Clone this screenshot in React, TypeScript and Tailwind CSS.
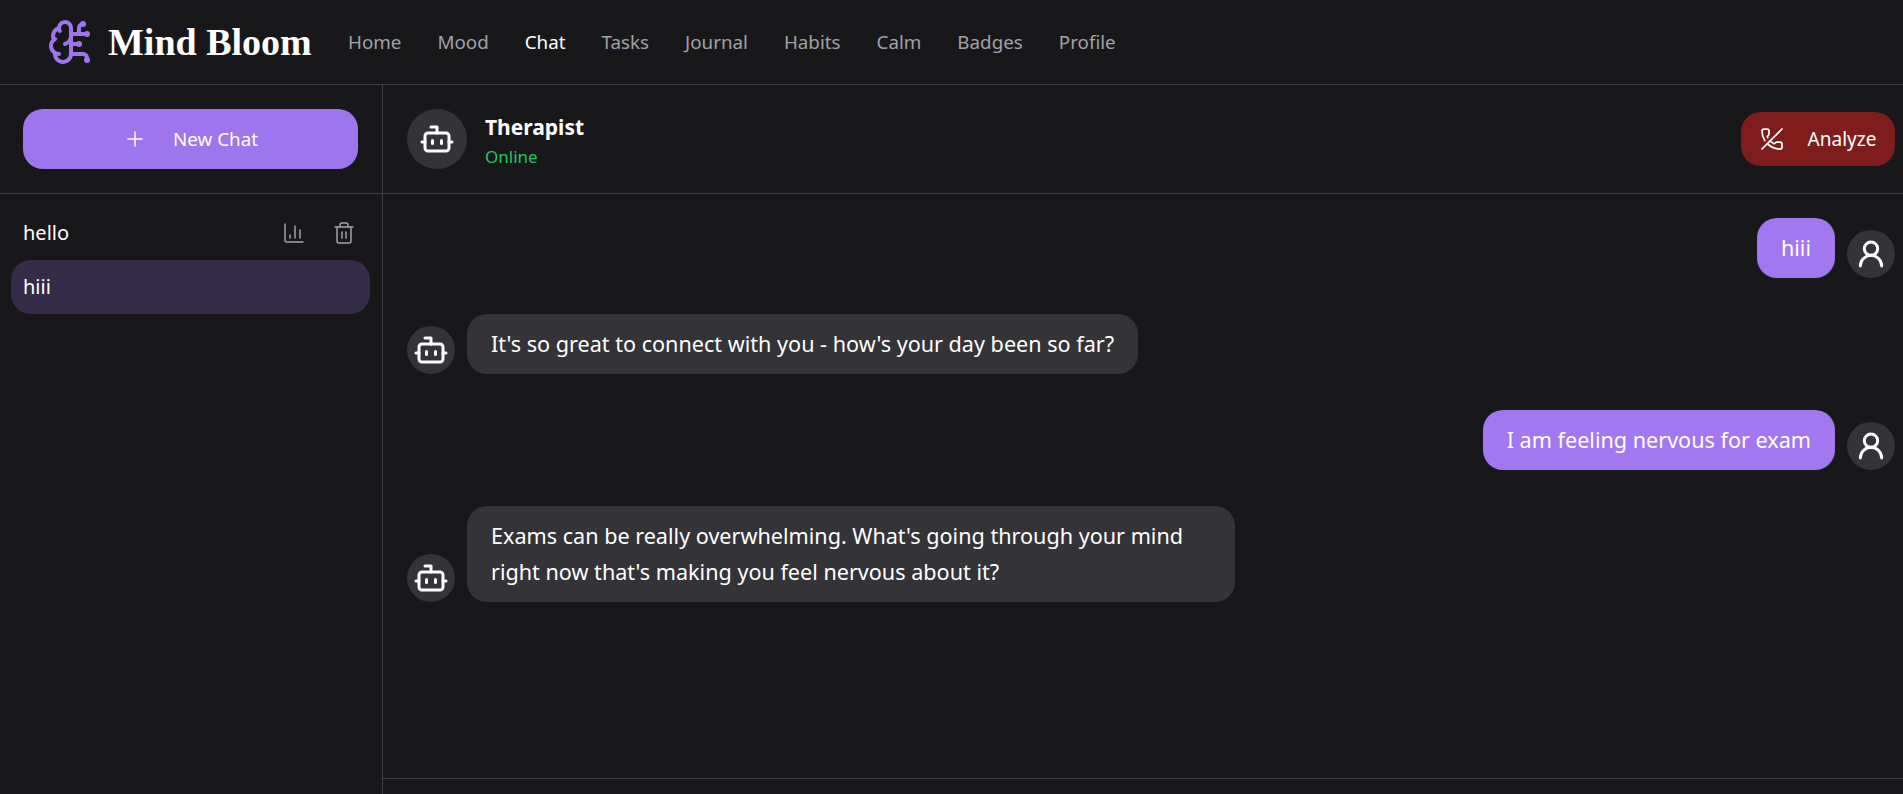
import React from "react";
import { Bot, BrainCircuit, ChartColumn, PhoneOff, Plus, Trash2, UserRound } from "lucide-react";

const navLinks = ["Home", "Mood", "Chat", "Tasks", "Journal", "Habits", "Calm", "Badges", "Profile"];

const Avatar = ({ user }: { user?: boolean }) => (
  <div className="flex h-12 w-12 shrink-0 items-center justify-center rounded-full bg-[#333338] text-white">
    {user ? <UserRound size={32} strokeWidth={2.2} /> : <Bot size={36} strokeWidth={2} />}
  </div>
);

const messages = [
  { id: 1, user: true, text: "hiii" },
  { id: 2, user: false, text: "It's so great to connect with you - how's your day been so far?" },
  { id: 3, user: true, text: "I am feeling nervous for exam" },
  {
    id: 4,
    user: false,
    text: "Exams can be really overwhelming. What's going through your mind right now that's making you feel nervous about it?",
  },
];

export default function App() {
  return (
    <div className="flex h-[794px] flex-col overflow-hidden bg-[#18181b] font-['Noto_Sans','Liberation_Sans',sans-serif] text-white">
      {/* Navbar */}
      <header className="flex h-[85px] shrink-0 items-center border-b border-[#3f3f46] pl-[47px]">
        <div className="flex w-[301px] items-center gap-[13px]">
          <BrainCircuit size={48} strokeWidth={2} className="text-[#9f75ee]" />
          <span className="font-['Liberation_Serif',serif] text-[38px] font-bold">Mind Bloom</span>
        </div>
        <nav className="flex items-center gap-9 text-[18.8px] text-[#a1a1aa]">
          {navLinks.map((link) => (
            <a key={link} className={link === "Chat" ? "text-white" : ""}>
              {link}
            </a>
          ))}
        </nav>
      </header>

      <div className="flex min-h-0 flex-1">
        {/* Sidebar */}
        <aside className="w-[383px] shrink-0 border-r border-[#3f3f46]">
          <div className="h-[109px] border-b border-[#3f3f46] px-[23px] pt-6">
            <button className="flex h-[60px] w-[335px] items-center justify-center gap-[26px] rounded-[20px] bg-[#9f75ee] text-[18.8px]">
              <Plus size={24} strokeWidth={1.5} />
              New Chat
            </button>
          </div>
          <div className="pl-[11px] pr-3 pt-3 text-[20px]">
            <div className="flex h-[54px] items-center justify-between rounded-[20px] pl-3 pr-[14px]">
              <span>hello</span>
              <div className="flex items-center gap-[26px] text-[#a1a1aa]">
                <ChartColumn size={24} strokeWidth={1.5} />
                <Trash2 size={24} strokeWidth={1.5} />
              </div>
            </div>
            <div className="flex h-[54px] items-center rounded-[20px] bg-[#352c49] px-3">hiii</div>
          </div>
        </aside>

        {/* Chat */}
        <main className="flex min-w-0 flex-1 flex-col">
          <div className="flex h-[109px] shrink-0 items-center justify-between border-b border-[#3f3f46] pl-6 pr-2">
            <div className="flex items-center gap-[18px]">
              <div className="flex h-[60px] w-[60px] items-center justify-center rounded-full bg-[#333338]">
                <Bot size={36} strokeWidth={2} />
              </div>
              <div className="pt-[2px]">
                <div className="text-[21px] font-bold leading-8">Therapist</div>
                <div className="mt-[2px] text-[17px] leading-6 text-[#22c55e]">Online</div>
              </div>
            </div>
            <button className="flex h-[54px] w-[154px] items-center justify-center gap-6 rounded-[20px] bg-[#7f1d1d] text-[19px]">
              <PhoneOff size={24} strokeWidth={1.75} />
              Analyze
            </button>
          </div>

          <div className="flex flex-1 flex-col gap-9 pb-6 pl-6 pr-2 pt-6 text-[21.6px] leading-9">
            {messages.map((m) =>
              m.user ? (
                <div key={m.id} className="flex items-end justify-end gap-3">
                  <div className="rounded-[20px] bg-[#a277f0] px-6 py-3">{m.text}</div>
                  <Avatar user />
                </div>
              ) : (
                <div key={m.id} className="flex items-end gap-3">
                  <Avatar />
                  <div className="max-w-[768px] rounded-[20px] bg-[#333338] px-6 py-3">{m.text}</div>
                </div>
              ),
            )}
          </div>

          <div className="h-4 shrink-0 border-t border-[#3f3f46]" />
        </main>
      </div>
    </div>
  );
}
